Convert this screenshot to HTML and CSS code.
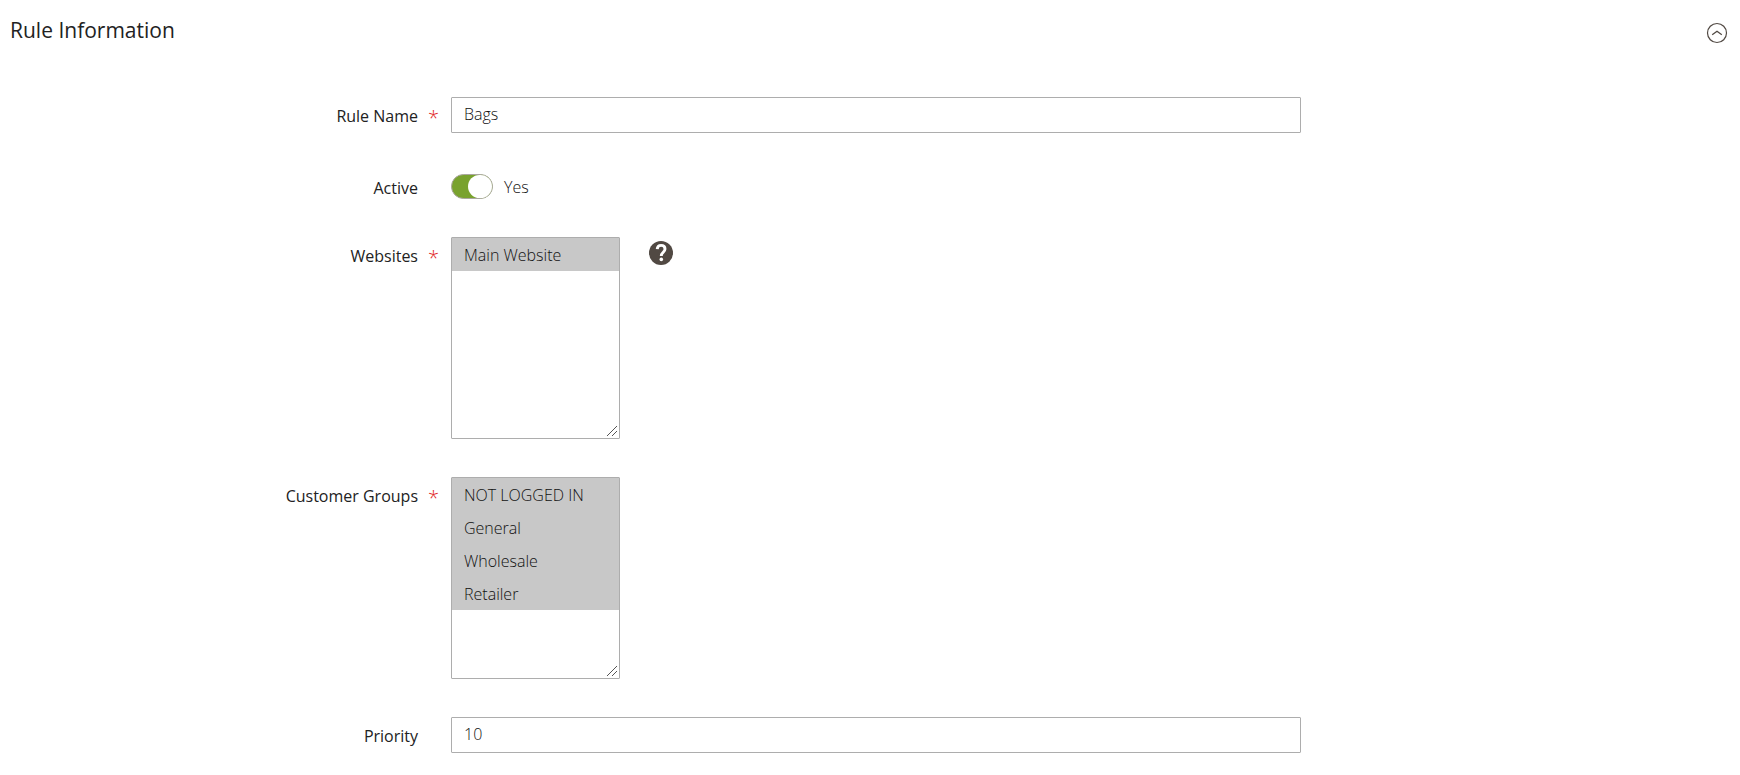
FILE: index.html
```html
<!DOCTYPE html>
<html lang="en">
<head>
    <meta charset="UTF-8">
    <meta name="viewport" content="width=device-width, initial-scale=1.0">
    <title>Rule Information</title>
    <link rel="stylesheet" href="styles.css">
</head>
<body>
    <header class="section-header">
        <h1 class="section-title">Rule Information</h1>
        <button type="button" class="collapse-button" aria-label="Collapse section" aria-expanded="true">
            <svg width="22" height="22" viewBox="0 0 22 22" fill="none" stroke="#514943">
                <circle cx="11" cy="11" r="9.5" stroke-width="1.2"/>
                <path d="M6.2 12.8 L11 9.2 L15.8 12.8" stroke-width="1.3"/>
            </svg>
        </button>
    </header>

    <form class="rule-form">
        <div class="field">
            <label class="field-label required" for="rule-name">Rule Name</label>
            <div class="field-control">
                <input type="text" id="rule-name" class="text-input" value="Bags">
            </div>
        </div>

        <div class="field field-switch">
            <label class="field-label" for="active">Active</label>
            <div class="field-control switch-control">
                <input type="checkbox" id="active" class="switch" checked>
                <span class="switch-text">Yes</span>
            </div>
        </div>

        <div class="field">
            <label class="field-label required" for="websites">Websites</label>
            <div class="field-control">
                <select id="websites" class="multiselect" multiple>
                    <option selected>Main Website</option>
                </select>
                <button type="button" class="tooltip-button" aria-label="Help">
                    <svg width="24" height="24" viewBox="0 0 24 24">
                        <circle cx="12" cy="12" r="12" fill="#514943"/>
                        <path d="M8.2 8.2 C8.4 5.6 10 4.4 12.1 4.4 C14.4 4.4 16 5.8 16 8 C16 11.2 12.3 11.3 12.3 14.9" fill="none" stroke="#fff" stroke-width="2.9"/>
                        <circle cx="12.3" cy="18.4" r="1.8" fill="#fff"/>
                    </svg>
                </button>
            </div>
        </div>

        <div class="field">
            <label class="field-label required" for="customer-groups">Customer Groups</label>
            <div class="field-control">
                <select id="customer-groups" class="multiselect" multiple>
                    <option selected>NOT LOGGED IN</option>
                    <option selected>General</option>
                    <option selected>Wholesale</option>
                    <option selected>Retailer</option>
                </select>
            </div>
        </div>

        <div class="field">
            <label class="field-label" for="priority">Priority</label>
            <div class="field-control">
                <input type="text" id="priority" class="text-input" value="10">
            </div>
        </div>
    </form>
</body>
</html>
```
FILE: styles.css
```css
* {
    box-sizing: border-box;
}

body {
    margin: 0;
    background-color: #fff;
    color: #222;
    font-family: "Open Sans", "Noto Sans", sans-serif;
    font-size: 16px;
    line-height: 22px;
}

.section-header {
    display: flex;
    justify-content: space-between;
    align-items: flex-end;
    padding: 16px 12px 0 10px;
}

.section-title {
    margin: 0;
    font-size: 21px;
    font-weight: 500;
    line-height: 28px;
}

.collapse-button,
.tooltip-button {
    display: flex;
    padding: 0;
    border: none;
    background: none;
    cursor: pointer;
}

.rule-form {
    display: flex;
    flex-direction: column;
    gap: 38px;
    padding: 53px 20px 20px;
}

/* label column + control column */
.field {
    display: grid;
    grid-template-columns: 25% 50%;
    column-gap: 6px;
    align-items: start;
}

.field-label {
    position: relative;
    padding: 8px 27px 0 0;
    font-weight: 500;
    text-align: right;
}

.required::after {
    content: "*";
    position: absolute;
    top: 10px;
    right: 6px;
    color: #e22626;
    font-size: 20px;
    font-weight: 300;
}

.field-control {
    display: flex;
    align-items: flex-start;
}

.text-input {
    width: 100%;
    height: 36px;
    padding: 0 12px 2px;
    border: 1px solid #adadad;
    border-radius: 1px;
    background-color: #fff;
    color: #111;
    font-family: inherit;
    font-size: 16px;
    font-weight: 300;
}

/* on/off switch */
.field-switch {
    align-items: center;
    padding-top: 3px;
}

.field-switch .field-label {
    padding-top: 2px;
}

.switch-control {
    align-items: center;
    gap: 11px;
}

.switch {
    appearance: none;
    display: flex;
    justify-content: flex-end;
    width: 42px;
    height: 25px;
    margin: 0;
    border: 1px solid #aaa6a0;
    border-radius: 13px;
    background-color: #79a22e;
    cursor: pointer;
}

.switch::before {
    content: "";
    width: 24px;
    height: 23px;
    border-radius: 12px;
    background-color: #fff;
}

.switch:not(:checked) {
    justify-content: flex-start;
    background-color: #ccc;
}

.switch-text {
    color: #111;
    font-weight: 300;
}

.multiselect {
    width: 169px;
    height: 202px;
    padding: 0;
    border: 1px solid #adadad;
    border-radius: 1px;
    background-color: #fff;
    font-family: inherit;
    font-size: 16px;
    overflow: auto;
    resize: both;
}

.multiselect::-webkit-scrollbar {
    width: 15px;
    height: 15px;
}

.multiselect::-webkit-resizer {
    background: url("data:image/svg+xml,%3Csvg xmlns='http://www.w3.org/2000/svg' width='15' height='15'%3E%3Cpath d='M3 13L13 3M8 13L13 8' stroke='%23555' fill='none'/%3E%3C/svg%3E") no-repeat;
}

.multiselect option {
    min-height: 33px;
    padding: 6px 12px 5px;
    font-weight: 300;
    line-height: 22px;
}

.multiselect option:checked {
    background: #c8c8c8 linear-gradient(#c8c8c8, #c8c8c8);
    color: #111;
}

.tooltip-button {
    margin: 4px 0 0 29px;
}
```
